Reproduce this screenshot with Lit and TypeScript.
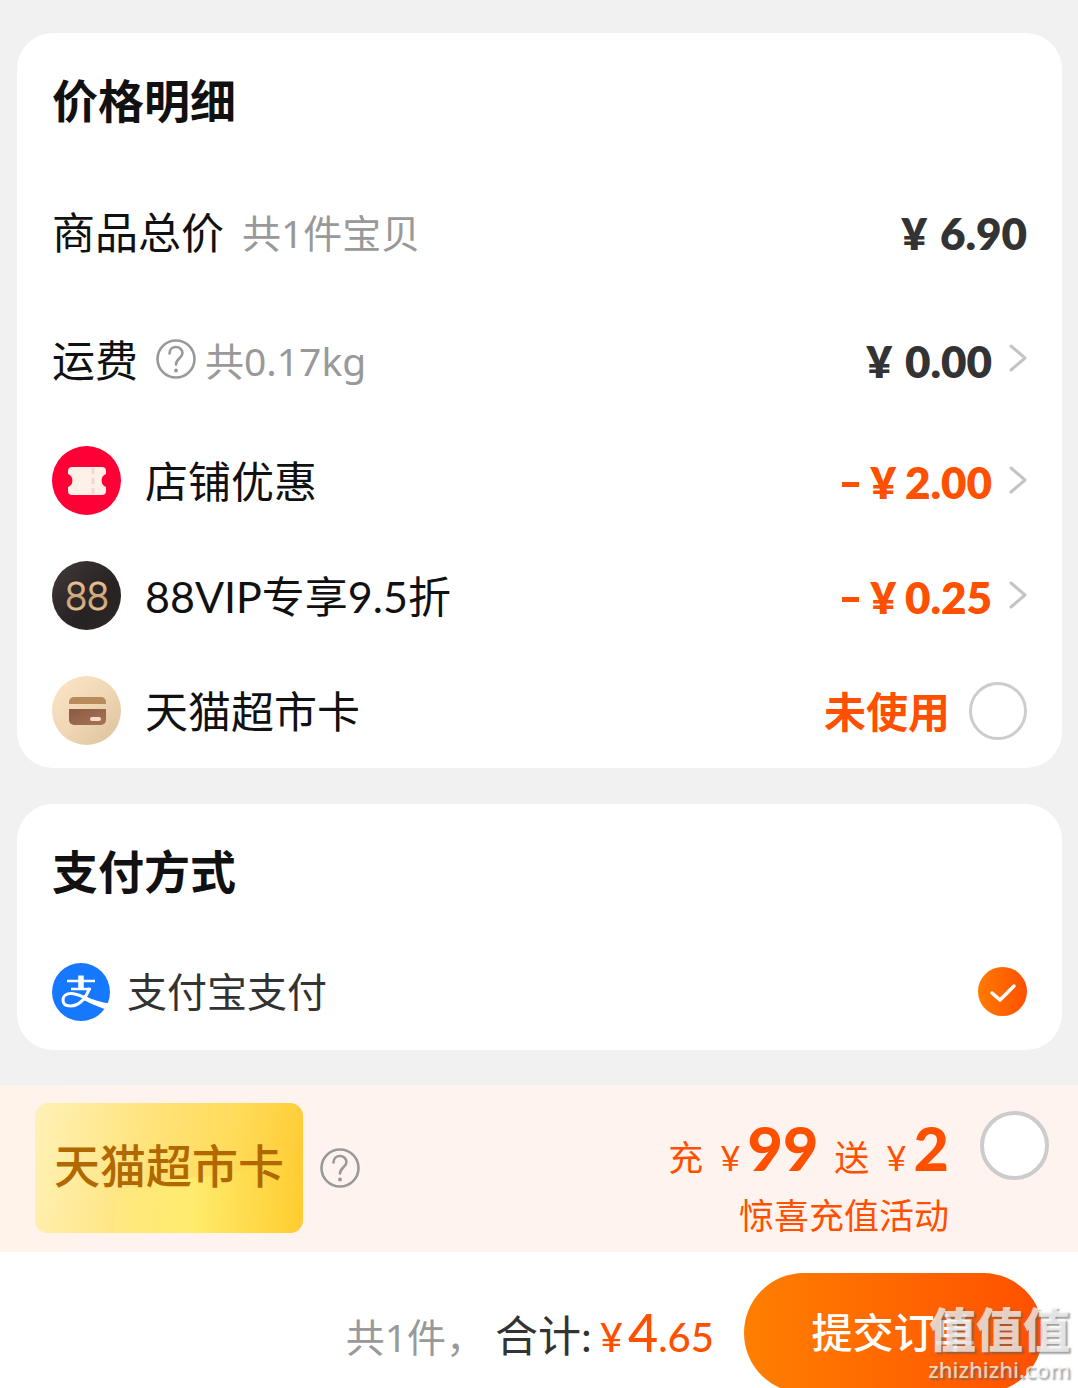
import { LitElement, html, css, svg, nothing } from "lit";
import { customElement, property, state } from "lit/decorators.js";

const ticketIcon = svg`
  <circle cx="34.500" cy="34.500" r="34.500" fill="#ff0036"/>
  <path d="M20 21h30a4 4 0 0 1 4 4v3a7 7 0 0 0 0 13v4a4 4 0 0 1-4 4H20a4 4 0 0 1-4-4v-4a7 7 0 0 0 0-13v-3a4 4 0 0 1 4-4z" fill="#fff0e8"/>
  <path d="M41 22v6M41 32v6M41 42v6" stroke="#f3d8d0" stroke-width="3"/>`;

const vipIcon = svg`
  <defs>
    <linearGradient id="dark" x1="0" y1="0" x2="1" y2="1">
      <stop offset="0" stop-color="#43393a"/><stop offset=".6" stop-color="#272223"/><stop offset="1" stop-color="#2e2925"/>
    </linearGradient>
    <linearGradient id="gold" x1="0" y1="0" x2="0" y2="1">
      <stop offset="0" stop-color="#f5d3a6"/><stop offset=".55" stop-color="#c9a277"/><stop offset="1" stop-color="#fbdcb0"/>
    </linearGradient>
  </defs>
  <circle cx="34.500" cy="34.500" r="34.500" fill="url(#dark)"/>
  <text class="vip-text" x="35" y="49" text-anchor="middle" fill="url(#gold)" stroke="url(#gold)" stroke-width=".8">88</text>`;

const cardIcon = svg`
  <defs>
    <linearGradient id="cream" x1="0" y1="0" x2="1" y2="1">
      <stop offset="0" stop-color="#fbe6c8"/><stop offset=".5" stop-color="#f0d7b5"/><stop offset="1" stop-color="#dcc09a"/>
    </linearGradient>
    <linearGradient id="brown" x1="0" y1="0" x2="1" y2="1">
      <stop offset="0" stop-color="#8a5a42"/><stop offset="1" stop-color="#a87456"/>
    </linearGradient>
  </defs>
  <circle cx="34.500" cy="34.500" r="34.500" fill="url(#cream)"/>
  <path d="M17 28v-2a5 5 0 0 1 5-5h27a5 5 0 0 1 5 5v2z" fill="#b98a5c"/>
  <path d="M17 33h37v11a5 5 0 0 1-5 5H22a5 5 0 0 1-5-5z" fill="url(#brown)"/>
  <rect x="38" y="41" width="11" height="4" rx="2" fill="#f8dccb"/>`;

const icons = { ticket: ticketIcon, vip: vipIcon, card: cardIcon };

type Row = {
  icon?: keyof typeof icons;
  label: string;
  note?: string;
  help?: boolean;
  amount: string;
  minus?: boolean;
  link?: boolean;
};

const rows: Row[] = [
  { label: "商品总价", note: "共1件宝贝", amount: "6.90" },
  { label: "运费", note: "共0.17kg", help: true, amount: "0.00", link: true },
  { icon: "ticket", label: "店铺优惠", amount: "2.00", minus: true, link: true },
  { icon: "vip", label: "88VIP专享9.5折", amount: "0.25", minus: true, link: true },
];

@customElement("help-button")
export class HelpButton extends LitElement {
  @property() label = "说明";

  static styles = css`
    :host { display: block; flex: none; }
    .help { display: block; padding: 0; border: 0; background: none; cursor: pointer; }
    .glyph { display: block; width: 40px; height: 40px; }
  `;

  render() {
    return html`<button class="help" type="button" aria-label=${this.label}>
      <svg class="glyph" viewBox="0 0 40 40" fill="none" stroke="#999" stroke-width="2.600" stroke-linecap="round">
        <circle cx="20" cy="20" r="18.500"/>
        <path d="M13.500 14.500c0-4 3-6.500 6.500-6.500s6.500 2.500 6.500 6c0 5-6.500 5.500-6.500 11.500"/>
        <circle cx="20" cy="31.500" r="2" fill="#999" stroke="none"/>
      </svg>
    </button>`;
  }
}

@customElement("app-root")
export class AppRoot extends LitElement {
  @state() private useCard = false;
  @state() private recharge = false;

  static styles = css`
    :host {
      display: flex;
      flex-direction: column;
      height: 100vh;
      overflow: hidden;
      position: relative;
      box-sizing: border-box;
      background: #f1f1f1;
      color: #111;
      font-family: Lato, "Noto Sans CJK SC", sans-serif;
    }
    * { box-sizing: border-box; }
    button { font: inherit; }
    .cards { display: flex; flex-direction: column; gap: 36px; padding: 33px 16px 35px 17px; flex: none; }
    .card { padding: 0 35px; border-radius: 36px; background: #fff; }
    .title { margin: 0; height: 134px; padding-top: 2px; display: flex; align-items: center; font-size: 46px; line-height: 60px; font-weight: 700; }
    .row { display: flex; align-items: center; height: 115px; font-size: 43px; line-height: 60px; }
    .row.plain { height: 128px; }
    .row.pay { height: 112px; padding-bottom: 5px; font-size: 40px; color: #333; }
    .icon { width: 70px; height: 70px; margin-right: 23px; flex: none; }
    .vip-text { font: 300 39px Roboto, sans-serif; }
    .label, .note, .amount, .unused { padding-top: 3px; }
    .note { margin-left: 18px; font-family: "Noto Sans", "Noto Sans CJK SC", sans-serif; font-size: 39px; color: #999; }
    .row help-button { margin-left: 18px; }
    help-button + .note { margin-left: 9px; }
    .price { display: flex; gap: 11px; margin-left: auto; padding: 0; border: 0; background: none; font-size: 44px; font-weight: 800; color: #333; }
    .price.off, .unused { color: #ff5000; }
    .amount { display: flex; gap: 13px; align-items: center; }
    .off .amount { gap: 9px; }
    .dash { align-self: center; width: 17px; height: 5px; background: #ff5000; margin-top: 8px; }
    .chevron { width: 18px; height: 30px; margin-left: 6px; align-self: center; }
    .unused { margin-left: auto; font-size: 42px; font-weight: 700; cursor: pointer; }
    .check { appearance: none; flex: none; margin: 0; width: 58px; height: 58px; border: 3px solid #ccc; border-radius: 50%; background: #fff; cursor: pointer; }
    .check:checked { border-color: #ff5000; background: #ff5000; }
    .row .check { margin-left: 19px; }
    .alipay { width: 58px; height: 58px; margin-right: 17px; flex: none; }
    .selected { position: relative; display: block; margin-left: auto; width: 49px; height: 49px; }
    .radio { appearance: none; display: block; margin: 0; width: 49px; height: 49px; border-radius: 50%; background: linear-gradient(90deg, #ff7a00, #ff5000); }
    .tick { position: absolute; inset: 0; pointer-events: none; }
    .promo { flex: none; display: flex; align-items: center; height: 167px; padding: 0 29px 2px 35px; background: linear-gradient(90deg, #fff3ea, #fff3ef 12%); color: #ff5000; }
    .gold {
      display: flex; align-items: center; justify-content: center; width: 268px; height: 130px; margin-right: 17px; padding-bottom: 4px;
      border-radius: 13px; overflow: hidden; position: relative; color: #b26800; font-size: 46px; font-weight: 500; line-height: 60px;
      background: linear-gradient(100deg, #fff2b8, #ffe37c 40%, #ffdc5a 70%, #ffc92e);
    }
    .shine { position: absolute; inset: 0; width: 100%; height: 100%; }
    .gold-text { position: relative; }
    .offer { display: flex; flex-direction: column; align-items: flex-end; margin-left: auto; padding-top: 24px; }
    .deal { display: flex; align-items: baseline; font-size: 35px; line-height: 62px; }
    .deal-text { margin-right: 17px; }
    .big { margin: 0 16px 0 7px; font-size: 61px; font-weight: 900; }
    .big.last { margin-right: 0; }
    .caption { font-size: 35px; line-height: 54px; }
    .promo .check { width: 69px; height: 69px; border-width: 4px; margin: 0 0 45px 31px; }
    .footer { flex: 1; min-height: 0; display: flex; justify-content: flex-end; align-items: flex-start; padding: 21px 35px 0; background: #fff; }
    .summary { display: flex; align-items: baseline; line-height: 118px; font-size: 43px; color: #333; }
    .count { margin-right: 10px; font-family: "Noto Sans", "Noto Sans CJK SC", sans-serif; font-size: 39px; color: #999; }
    .total { display: flex; align-items: baseline; margin-left: 8px; font-size: 40px; font-weight: 500; color: #ff5000; }
    .whole { margin-left: 5px; font-size: 52px; }
    .submit { width: 299px; height: 120px; flex: none; margin-left: 30px; padding: 0; border: 0; border-radius: 60px; background: linear-gradient(90deg, #ff7f00, #ff5000); color: #fff; font-size: 41px; font-weight: 500; line-height: 60px; cursor: pointer; }
    .mark { position: absolute; right: 8px; bottom: 6px; display: flex; flex-direction: column; align-items: flex-end; color: rgba(255, 255, 255, 0.72); text-shadow: 2px 2px 2px rgba(90, 90, 90, 0.6); pointer-events: none; }
    .mark-name { font-size: 47px; font-weight: 800; line-height: 54px; }
    .mark-site { font-family: "Noto Sans", sans-serif; font-size: 22px; font-weight: 500; line-height: 26px; }
  `;

  private chevron() {
    return html`<svg class="chevron" viewBox="0 0 18 30" fill="none" stroke="#c4c4c4" stroke-width="3" stroke-linecap="round" stroke-linejoin="round" aria-hidden="true"><path d="M2 2 16 14 2 26"/></svg>`;
  }

  private row(r: Row) {
    const body = html`${r.minus ? html`<span class="dash" role="img" aria-label="减"></span>` : nothing}
      <span class="amount"><span>¥</span><span>${r.amount}</span></span>
      ${r.link ? this.chevron() : nothing}`;
    const cls = r.minus ? "price off" : "price";
    return html`<div class="row ${r.icon ? "" : "plain"}">
      ${r.icon ? html`<svg class="icon" viewBox="0 0 70 70" aria-hidden="true">${icons[r.icon]}</svg>` : nothing}
      <span class="label">${r.label}</span>
      ${r.help ? html`<help-button label="运费说明"></help-button>` : nothing}
      ${r.note ? html`<span class="note">${r.note}</span>` : nothing}
      ${r.link ? html`<button class=${cls} type="button">${body}</button>` : html`<span class=${cls}>${body}</span>`}
    </div>`;
  }

  render() {
    return html`
      <main class="cards">
        <section class="card">
          <h2 class="title">价格明细</h2>
          ${rows.map((r) => this.row(r))}
          <div class="row">
            <svg class="icon" viewBox="0 0 70 70" aria-hidden="true">${icons.card}</svg>
            <span class="label">天猫超市卡</span>
            <label class="unused" for="use-card">未使用</label>
            <input class="check" id="use-card" type="checkbox" .checked=${this.useCard}
              @change=${(e: Event) => (this.useCard = (e.target as HTMLInputElement).checked)} />
          </div>
        </section>
        <section class="card">
          <h2 class="title">支付方式</h2>
          <div class="row pay">
            <svg class="alipay" viewBox="0 0 58 58" aria-hidden="true">
              <circle cx="29" cy="29" r="29" fill="#1677ff"/>
              <g fill="none" stroke="#fff">
                <path d="M15 18h28M19 26h20" stroke-width="2.600"/>
                <path d="M29 12.500v13" stroke-width="5.500"/>
                <path d="M37.500 25c-3 9-9.500 18-19 18-5 0-7.500-2.300-7.500-6s3-6.500 8-6.500c7 0 13 3.500 19 7" stroke-width="3"/>
              </g>
              <path d="M33 33c7 3.500 15 6 24.500 7.500l-5 5.500c-8-3-15-6-22-9.500z" fill="#fff"/>
            </svg>
            <label for="alipay">支付宝支付</label>
            <span class="selected">
              <input class="radio" id="alipay" type="radio" name="pay" checked />
              <svg class="tick" viewBox="0 0 49 49" fill="none" stroke="#fff" stroke-width="3.500" stroke-linecap="round" stroke-linejoin="round" aria-hidden="true"><path d="M14 26l8 7 14-14"/></svg>
            </span>
          </div>
        </section>
      </main>
      <section class="promo">
        <div class="gold">
          <svg class="shine" viewBox="0 0 268 130" preserveAspectRatio="none" aria-hidden="true">
            <defs><linearGradient id="glow" x1="0" y1="0" x2="1" y2="0">
              <stop offset="0" stop-color="#ffef80" stop-opacity=".35"/><stop offset=".4" stop-color="#ffef70" stop-opacity=".8"/><stop offset="1" stop-color="#ffd030" stop-opacity=".5"/>
            </linearGradient></defs>
            <path d="M79 130V92C120 70 180 78 215 66c22-14 38-18 48 4 4 12 5 34 4 60z" fill="url(#glow)"/>
          </svg>
          <span class="gold-text">天猫超市卡</span>
        </div>
        <help-button label="天猫超市卡说明"></help-button>
        <label class="offer" for="recharge">
          <span class="deal"><span class="deal-text">充</span><span>¥</span><span class="big">99</span><span class="deal-text">送</span><span>¥</span><span class="big last">2</span></span>
          <span class="caption">惊喜充值活动</span>
        </label>
        <input class="check" id="recharge" type="checkbox" .checked=${this.recharge}
          @change=${(e: Event) => (this.recharge = (e.target as HTMLInputElement).checked)} />
      </section>
      <footer class="footer">
        <div class="summary">
          <span class="count">共1件，</span><span>合计:</span>
          <span class="total"><span>¥</span><span class="whole">4</span><span>.65</span></span>
        </div>
        <button class="submit" type="button">提交订单</button>
      </footer>
      <div class="mark"><span class="mark-name">值值值</span><span class="mark-site">zhizhizhi.com</span></div>
    `;
  }
}
